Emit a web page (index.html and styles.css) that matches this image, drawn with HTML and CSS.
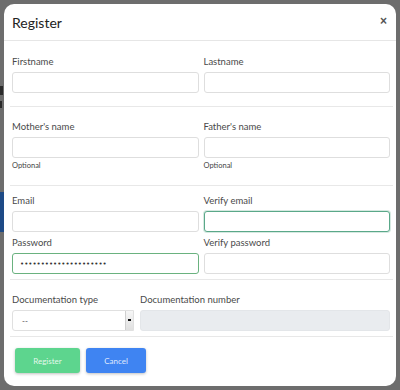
FILE: index.html
```html
<!DOCTYPE html>
<html lang="en">
<head>
    <meta charset="UTF-8">
    <meta name="viewport" content="width=device-width, initial-scale=1.0">
    <title>Register</title>
    <link rel="stylesheet" href="styles.css">
</head>
<body>
    <div class="page-behind">
        <div class="behind-mark m1"></div>
        <div class="behind-mark m2"></div>
        <div class="behind-bar"></div>
    </div>

    <div class="modal">
        <header class="modal-header">
            <h1>Register</h1>
            <span class="close">&times;</span>
        </header>

        <form class="modal-body">
            <div class="row first">
                <div class="field">
                    <label for="firstname">Firstname</label>
                    <input type="text" id="firstname">
                </div>
                <div class="field">
                    <label for="lastname">Lastname</label>
                    <input type="text" id="lastname">
                </div>
            </div>

            <hr class="sep-a">

            <div class="row">
                <div class="field">
                    <label for="mother">Mother's name</label>
                    <input type="text" id="mother">
                    <small>Optional</small>
                </div>
                <div class="field">
                    <label for="father">Father's name</label>
                    <input type="text" id="father">
                    <small>Optional</small>
                </div>
            </div>

            <hr class="sep-b">

            <div class="row">
                <div class="field">
                    <label for="email">Email</label>
                    <input type="email" id="email">
                </div>
                <div class="field">
                    <label for="email2">Verify email</label>
                    <input type="email" id="email2" class="focused">
                </div>
            </div>

            <div class="row second">
                <div class="field">
                    <label for="password">Password</label>
                    <input type="password" id="password" class="valid" value="passwordpassword12345">
                </div>
                <div class="field">
                    <label for="password2">Verify password</label>
                    <input type="password" id="password2">
                </div>
            </div>

            <hr class="sep-c">

            <div class="row docs">
                <div class="field">
                    <label>Documentation type</label>
                    <div class="select">
                        <span>--</span>
                        <span class="select-arrow"></span>
                    </div>
                </div>
                <div class="field">
                    <label for="docnumber">Documentation number</label>
                    <input type="text" id="docnumber" disabled>
                </div>
            </div>

            <hr class="sep-d">
        </form>

        <footer class="modal-footer">
            <button class="btn btn-register">Register</button>
            <button class="btn btn-cancel">Cancel</button>
        </footer>
    </div>
</body>
</html>
```

FILE: styles.css
```css
body {
    margin: 0;
    padding: 0;
    background: #6d6d6d;
    font-family: Lato, "Open Sans", Arial, sans-serif;
    color: #4a4a4a;
    position: relative;
}

/* bits of the page under the backdrop */
.page-behind {
    position: absolute;
    top: 0;
    left: 0;
    width: 10px;
    height: 390px;
    overflow: hidden;
}

.behind-mark {
    position: absolute;
    left: 0;
    width: 3px;
    background: #2b2b2b;
}

.m1 { top: 86px; height: 9px; }
.m2 { top: 101px; height: 7px; width: 2px; }

.behind-bar {
    position: absolute;
    left: 0;
    top: 192px;
    width: 10px;
    height: 40px;
    background: #1e4a86;
}

.modal {
    position: relative;
    margin: 4px;
    height: 382px;
    background: #fff;
    border-radius: 10px;
    overflow: hidden;
}

.modal-header {
    height: 36px;
    display: flex;
    align-items: center;
    justify-content: space-between;
    padding: 0 9px 0 8px;
    border-bottom: 1px solid #e6e6e6;
}

.modal-header h1 {
    margin: 0;
    font-size: 14px;
    font-weight: 400;
    color: #222;
}

.close {
    font-family: Arial, sans-serif;
    font-size: 12px;
    font-weight: 700;
    color: #555;
    line-height: 1;
    margin-top: -2px;
}

.modal-body {
    padding: 15px 6px 0 8px;
}

.row {
    display: grid;
    grid-template-columns: 1fr 1fr;
    gap: 5px;
}

.row.second {
    margin-top: 5px;
}

.row.docs {
    grid-template-columns: 122px 1fr;
    gap: 6px;
}

.field label {
    display: block;
    font-size: 9.5px;
    line-height: 12px;
    margin-bottom: 4px;
    color: #4a4a4a;
}

.field input {
    display: block;
    box-sizing: border-box;
    width: 100%;
    height: 21px;
    margin: 0;
    padding: 0 7px;
    border: 1px solid #dedede;
    border-radius: 3px;
    background: #fff;
    font-family: "DejaVu Sans", sans-serif;
    font-size: 7px;
    letter-spacing: 0;
    color: #333;
    outline: none;
}

.field input.focused {
    border-color: #5aa889;
    box-shadow: 0 0 0 1px rgba(90, 168, 137, 0.25);
}

.field input.valid {
    border-color: #6ab27f;
}

.field input:disabled {
    background: #e9ecef;
    border-color: #e3e6e9;
}

.field small {
    display: block;
    font-size: 7.5px;
    line-height: 10px;
    margin-top: 3px;
    color: #444;
}

hr {
    border: 0;
    border-top: 1px solid #e8e8e8;
    margin-left: -2px;
    margin-right: -3px;
}

.sep-a { margin-top: 13px; margin-bottom: 14px; }
.sep-b { margin-top: 14px; margin-bottom: 9px; }
.sep-c { margin-top: 5px; margin-bottom: 14px; }
.sep-d { margin-top: 5px; margin-bottom: 0; }

.select {
    display: flex;
    align-items: center;
    justify-content: space-between;
    box-sizing: border-box;
    height: 21px;
    border: 1px solid #e0e0e0;
    border-radius: 3px 0 0 3px;
    background: #fff;
    font-size: 8px;
    color: #444;
    padding-left: 9px;
}

.select-arrow {
    width: 7px;
    height: 19px;
    border-left: 1px solid #cfcfcf;
    background: linear-gradient(#f6f6f6, #e0e0e0);
    position: relative;
}

.select-arrow::after {
    content: "";
    position: absolute;
    left: 2px;
    top: 8px;
    width: 3px;
    height: 2px;
    background: #111;
}

.modal-footer {
    display: flex;
    gap: 6px;
    padding: 11px 0 0 11px;
}

.btn {
    height: 25px;
    border: none;
    border-radius: 3px;
    color: rgba(255, 255, 255, 0.85);
    font-family: Lato, Arial, sans-serif;
    font-size: 8px;
    box-shadow: 0 1px 3px rgba(0, 0, 0, 0.25);
    cursor: pointer;
}

.btn-register {
    width: 65px;
    background: #5dd58e;
}

.btn-cancel {
    width: 60px;
    background: #3f84f2;
}
```
